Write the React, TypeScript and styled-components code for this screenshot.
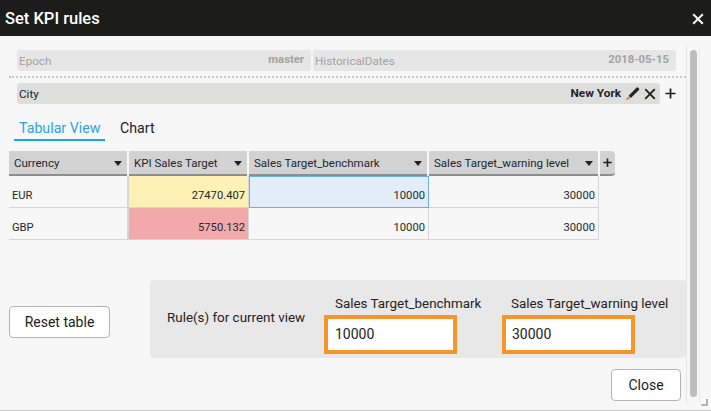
import React from "react";
import styled, { createGlobalStyle } from "styled-components";

const GlobalStyle = createGlobalStyle`
  html, body {
    margin: 0;
    padding: 0;
    background: #f7f7f7;
  }
  * {
    box-sizing: border-box;
  }
`;

const Dialog = styled.div`
  width: 711px;
  height: 411px;
  display: flex;
  flex-direction: column;
  position: relative;
  overflow: hidden;
  background: #f7f7f7;
  border-bottom: 1px solid #c8c8c8;
  font-family: Roboto, "Noto Sans", sans-serif;
  font-size: 12px;
  color: #222;
`;

const TitleBar = styled.div`
  height: 36px;
  flex: none;
  display: flex;
  align-items: center;
  justify-content: space-between;
  padding: 0 7px 0 5px;
  background: #1c1c1a;
  color: #fff;
  font-size: 16.5px;
  font-weight: 500;
`;

const CloseIcon = styled.svg`
  width: 12px;
  height: 12px;
  margin-top: 1px;
`;

const Body = styled.div`
  flex: 1;
  display: flex;
  min-height: 0;
`;

const Content = styled.div`
  width: 686px;
  flex: none;
  padding: 14px 0 0 9px;
  display: flex;
  flex-direction: column;
`;

const ScrollTrack = styled.div`
  width: 14px;
  flex: none;
  margin-top: 10px;
  margin-bottom: 6px;
  padding: 4px 2px 0 3px;
  border-left: 1px solid #e6e6e6;
  border-right: 1px solid #ececec;
`;

const ScrollThumb = styled.div`
  height: 347px;
  background: #bdbdbd;
  border-radius: 4px;
`;

const Grip = styled.svg`
  position: absolute;
  right: 3px;
  bottom: 4px;
  width: 7px;
  height: 7px;
`;

const FilterRow = styled.div`
  display: flex;
  gap: 2px;
  padding: 0 10px 0 8px;
  height: 21px;
`;

const Filter = styled.div<{ $width: number; $active?: boolean }>`
  width: ${(p) => p.$width}px;
  height: 21px;
  flex: none;
  display: flex;
  align-items: center;
  justify-content: space-between;
  padding: 0 7px 0 2px;
  border-radius: 3px;
  background: ${(p) => (p.$active ? "#dededc" : "#e6e6e6")};
  color: ${(p) => (p.$active ? "#222" : "#a2a2a2")};
  font-size: 11.7px;
`;

const FilterValue = styled.span<{ $active?: boolean }>`
  font-weight: 700;
  font-size: ${(p) => (p.$active ? "11.8px" : "11.3px")};
  color: ${(p) => (p.$active ? "#1e2233" : "#a2a2a2")};
  margin-top: -2px;
`;

const Divider = styled.div`
  margin: 5px 0;
  border-top: 2px dotted #c4c4c4;
  height: 0;
  width: 677px;
`;

const FilterTools = styled.div`
  display: flex;
  align-items: center;
  gap: 4px;
  margin-right: -3px;
`;

const CityRow = styled.div`
  display: flex;
  align-items: center;
  gap: 5px;
  padding-left: 8px;
  height: 21px;
`;

const Tabs = styled.div`
  display: flex;
  align-items: flex-end;
  margin: 13px 0 0 5px;
  height: 24px;
  font-size: 14.2px;
`;

const Tab = styled.div<{ $active?: boolean }>`
  height: 24px;
  padding: 0 5px;
  width: ${(p) => (p.$active ? "91px" : "auto")};
  margin-right: ${(p) => (p.$active ? "10px" : "0")};
  line-height: 22px;
  text-align: center;
  white-space: nowrap;
  color: ${(p) => (p.$active ? "#2aa5e8" : "#1c2030")};
  border-bottom: ${(p) => (p.$active ? "2px solid #17a6ec" : "none")};
`;

const Table = styled.div`
  margin-top: 10px;
  display: grid;
  grid-template-columns: 120px 120px 180px 170px 16px;
  grid-template-rows: 25px 32px 32px;
  width: 606px;
`;

const HeadCell = styled.div<{ $width?: number }>`
  height: 25px;
  width: ${(p) => p.$width ?? 118}px;
  display: flex;
  align-items: center;
  justify-content: space-between;
  padding: 1px 5px 0 5px;
  background: #d2d2d2;
  border-bottom: 2px solid #8e8e8e;
  white-space: nowrap;
  font-size: 11.5px;
  color: #23262e;
`;

const Caret = styled.span`
  width: 0;
  height: 0;
  border-left: 4px solid transparent;
  border-right: 4px solid transparent;
  border-top: 5px solid #222;
  flex: none;
`;

const AddColumn = styled.div`
  height: 25px;
  width: 15px;
  margin-left: 1px;
  background: #d2d2d2;
  border-bottom: 2px solid #8e8e8e;
  border-radius: 0 4px 4px 0;
  display: flex;
  align-items: center;
  justify-content: center;
`;

const Cell = styled.div<{ $tone?: "yellow" | "red" | "focus"; $left?: boolean }>`
  height: 32px;
  padding: 9px 3px 0 3px;
  line-height: 22px;
  font-size: 11.2px;
  text-align: ${(p) => (p.$left ? "left" : "right")};
  color: #23262e;
  border-bottom: 1px solid #d6d6d6;
  border-right: 1px solid #d6d6d6;
  background: ${(p) =>
    p.$tone === "yellow"
      ? "#fdf1b6"
      : p.$tone === "red"
        ? "#f3a9aa"
        : p.$tone === "focus"
          ? "#e2edf8"
          : "transparent"};
  ${(p) => (p.$tone === "focus" ? "border: 1px solid #6cb2e6; padding-top: 8px;" : "")}
  ${(p) => (p.$left ? "border-right: 2px solid #d6d6d6;" : "")}
`;

const Footer = styled.div`
  display: flex;
  align-items: center;
  margin-top: 40px;
`;

const ResetButton = styled.button`
  width: 101px;
  height: 32px;
  margin-top: 6px;
  padding: 0;
  border: 1px solid #b4b4b4;
  border-radius: 4px;
  background: #fff;
  font-family: inherit;
  font-size: 14px;
  color: #1c1c1c;
`;

const CloseButton = styled(ResetButton)`
  width: 70px;
  margin-top: 0;
`;

const RulesPanel = styled.div`
  margin-left: 40px;
  width: 536px;
  height: 78px;
  display: flex;
  align-items: flex-start;
  background: #e8e8e8;
  border-radius: 4px;
`;

const RulesLabel = styled.div`
  width: 174px;
  padding: 30px 0 0 17px;
  font-size: 13.4px;
  white-space: nowrap;
`;

const RuleField = styled.div<{ $width: number }>`
  width: ${(p) => p.$width}px;
  padding-top: 14px;
  display: flex;
  flex-direction: column;
  gap: 1px;
`;

const RuleLabel = styled.div<{ $inset: number }>`
  margin-left: ${(p) => p.$inset}px;
  height: 20px;
  line-height: 20px;
  font-size: 13.4px;
  white-space: nowrap;
`;

const RuleInput = styled.div<{ $inset: number }>`
  width: 133px;
  height: 39px;
  border: 4px solid #f7952b;
  background: #fff;
  padding-left: ${(p) => p.$inset}px;
  line-height: 31px;
  font-size: 14px;
  color: #222;
`;

const CloseRow = styled.div`
  display: flex;
  justify-content: flex-end;
  padding-right: 5px;
  margin-top: 11px;
`;

const CrossGlyph = ({ color, size }: { color: string; size: number }) => (
  <svg width={size} height={size} viewBox="0 0 12 12">
    <path d="M1.2 1.2 10.8 10.8M10.8 1.2 1.2 10.8" stroke={color} strokeWidth="1.9" fill="none" />
  </svg>
);

const PlusGlyph = ({ size, weight }: { size: number; weight: number }) => (
  <svg width={size} height={size} viewBox="0 0 12 12">
    <path d="M6 .5V11.5M.5 6H11.5" stroke="#1e1e1e" strokeWidth={weight} fill="none" />
  </svg>
);

const Pencil = () => (
  <svg width="15" height="15" viewBox="0 0 15 15">
    <path d="M3.6 9.8 11.6 1.6a1 1 0 0 1 1.4 0l1 1a1 1 0 0 1 0 1.4L5.8 12Z" fill="#262626" />
    <path d="M3 10.4 5.2 12.6 .6 14.6Z" fill="#d08060" />
  </svg>
);

export default function App() {
  return (
    <Dialog>
      <GlobalStyle />
      <TitleBar>
        <span>Set KPI rules</span>
        <CloseIcon viewBox="0 0 12 12">
          <path d="M1.2 1.2 10.8 10.8M10.8 1.2 1.2 10.8" stroke="#fff" strokeWidth="2" fill="none" />
        </CloseIcon>
      </TitleBar>
      <Body>
        <Content>
          <FilterRow>
            <Filter $width={294}>
              <span>Epoch</span>
              <FilterValue>master</FilterValue>
            </Filter>
            <Filter $width={363}>
              <span>HistoricalDates</span>
              <FilterValue>2018-05-15</FilterValue>
            </Filter>
          </FilterRow>
          <Divider />
          <CityRow>
            <Filter $width={643} $active>
              <span>City</span>
              <FilterTools>
                <FilterValue $active>New York</FilterValue>
                <Pencil />
                <CrossGlyph color="#222" size={12} />
              </FilterTools>
            </Filter>
            <PlusGlyph size={11} weight={1.9} />
          </CityRow>
          <Tabs>
            <Tab $active>Tabular View</Tab>
            <Tab>Chart</Tab>
          </Tabs>
          <Table>
            <HeadCell>
              Currency
              <Caret />
            </HeadCell>
            <HeadCell>
              KPI Sales Target
              <Caret />
            </HeadCell>
            <HeadCell $width={178}>
              Sales Target_benchmark
              <Caret />
            </HeadCell>
            <HeadCell $width={169}>
              Sales Target_warning level
              <Caret />
            </HeadCell>
            <AddColumn>
              <PlusGlyph size={9} weight={2.2} />
            </AddColumn>

            <Cell $left>EUR</Cell>
            <Cell $tone="yellow">27470.407</Cell>
            <Cell $tone="focus">10000</Cell>
            <Cell>30000</Cell>
            <span />

            <Cell $left>GBP</Cell>
            <Cell $tone="red">5750.132</Cell>
            <Cell>10000</Cell>
            <Cell>30000</Cell>
            <span />
          </Table>
          <Footer>
            <ResetButton>Reset table</ResetButton>
            <RulesPanel>
              <RulesLabel>Rule(s) for current view</RulesLabel>
              <RuleField $width={178}>
                <RuleLabel $inset={11}>Sales Target_benchmark</RuleLabel>
                <RuleInput $inset={7}>10000</RuleInput>
              </RuleField>
              <RuleField $width={170}>
                <RuleLabel $inset={9}>Sales Target_warning level</RuleLabel>
                <RuleInput $inset={6}>30000</RuleInput>
              </RuleField>
            </RulesPanel>
          </Footer>
          <CloseRow>
            <CloseButton>Close</CloseButton>
          </CloseRow>
        </Content>
        <ScrollTrack>
          <ScrollThumb />
        </ScrollTrack>
      </Body>
      <Grip viewBox="0 0 7 7">
        <path d="M0 5h5V0h2v7H0Z" fill="#b4b4b4" />
      </Grip>
    </Dialog>
  );
}
